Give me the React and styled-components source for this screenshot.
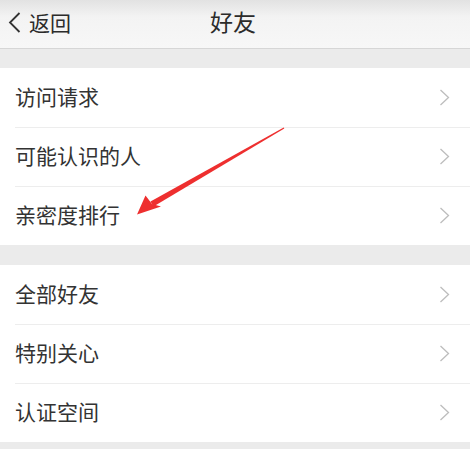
import React from 'react'
import styled, { createGlobalStyle } from 'styled-components'

const GlobalStyle = createGlobalStyle`
  html, body {
    margin: 0;
    padding: 0;
    background: #ebebeb;
  }
  body {
    font-family: "Noto Sans CJK SC", "Noto Sans", sans-serif;
  }
`

const Page = styled.div`
  position: relative;
  width: 470px;
  height: 449px;
  overflow: hidden;
  background: #ebebeb;
`

const Header = styled.div`
  height: 48px;
  display: grid;
  grid-template-columns: 1fr auto 1fr;
  align-items: center;
  background: linear-gradient(#e2e2e2 0%, #f3f3f3 35%, #f7f7f7 100%);
  border-bottom: 1px solid #d6d6d6;
  color: #2b2b2b;
`

const Back = styled.div`
  display: flex;
  align-items: center;
  gap: 8px;
  padding-left: 8px;
  font-size: 21px;
  line-height: 1;
  margin-top: -4px;
`

const Title = styled.div`
  font-size: 23px;
  line-height: 1;
  margin-top: -5px;
  margin-left: -4px;
`

const Group = styled.div`
  background: #fff;
  margin-top: ${p => p.gap}px;
`

const Row = styled.div`
  height: 59px;
  display: flex;
  align-items: center;
  justify-content: space-between;
  padding-left: 15px;
  padding-right: 20px;
  position: relative;
  font-size: 21px;
  color: #333;

  & + &::before {
    content: '';
    position: absolute;
    top: 0;
    left: 15px;
    right: 0;
    height: 1px;
    background: #ededed;
  }
`

const Label = styled.span`
  margin-top: -3px;
`

const Chevron = () => (
  <svg width="11" height="17" viewBox="0 0 11 17">
    <path d="M1.5 1 L9.5 8.5 L1.5 16" fill="none" stroke="#bdbdbd" strokeWidth="1.3" />
  </svg>
)

const BackIcon = () => (
  <svg width="13" height="21" viewBox="0 0 13 21">
    <path d="M11.5 1 L2 10.5 L11.5 20" fill="none" stroke="#333" strokeWidth="1.8" />
  </svg>
)

const ArrowLayer = styled.svg`
  position: absolute;
  left: 0;
  top: 0;
  pointer-events: none;
`

const groups = [
  { gap: 19, items: ['访问请求', '可能认识的人', '亲密度排行'] },
  { gap: 20, items: ['全部好友', '特别关心', '认证空间'] },
]

export default function App() {
  return (
    <Page>
      <GlobalStyle />
      <Header>
        <Back>
          <BackIcon />
          <span>返回</span>
        </Back>
        <Title>好友</Title>
        <div />
      </Header>
      {groups.map((g, i) => (
        <Group key={i} gap={g.gap}>
          {g.items.map(t => (
            <Row key={t}>
              <Label>{t}</Label>
              <Chevron />
            </Row>
          ))}
        </Group>
      ))}
      <ArrowLayer width="470" height="449" viewBox="0 0 470 449">
        <polygon points="284.3,128.4 153.5,206.4 150.5,201.6 283.7,127.6" fill="#ee2f2f" />
        <polygon points="137,214.5 145.5,195.5 152,204 161,206.5" fill="#ee2f2f" />
      </ArrowLayer>
    </Page>
  )
}
